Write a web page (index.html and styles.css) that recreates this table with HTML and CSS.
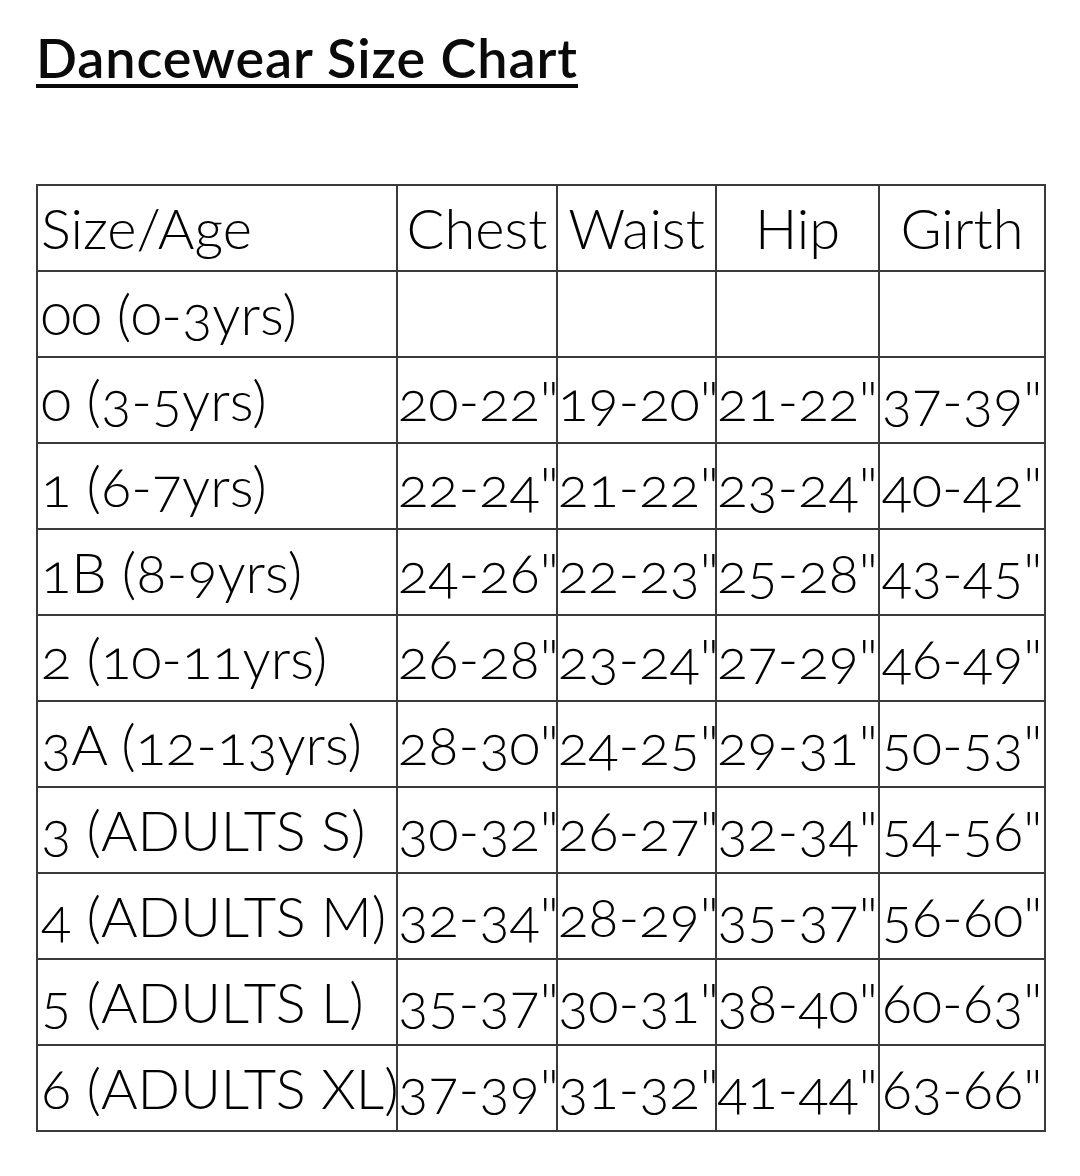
FILE: index.html
```html
<!DOCTYPE html>
<html lang="en">
<head>
<meta charset="utf-8">
<title>Dancewear Size Chart</title>
<link rel="stylesheet" href="styles.css">
</head>
<body>
<main class="page">
  <h1 class="title">Dancewear Size Chart</h1>
  <table class="chart">
    <colgroup>
      <col class="c-size">
      <col class="c-chest">
      <col class="c-waist">
      <col class="c-hip">
      <col class="c-girth">
    </colgroup>
    <tr><td class="label">Size/Age</td><td>Chest</td><td>Waist</td><td>Hip</td><td>Girth</td></tr>
    <tr><td class="label">00 (0-3yrs)</td><td></td><td></td><td></td><td></td></tr>
    <tr><td class="label">0 (3-5yrs)</td><td>20-22"</td><td>19-20"</td><td>21-22"</td><td>37-39"</td></tr>
    <tr><td class="label">1 (6-7yrs)</td><td>22-24"</td><td>21-22"</td><td>23-24"</td><td>40-42"</td></tr>
    <tr><td class="label">1B (8-9yrs)</td><td>24-26"</td><td>22-23"</td><td>25-28"</td><td>43-45"</td></tr>
    <tr><td class="label">2 (10-11yrs)</td><td>26-28"</td><td>23-24"</td><td>27-29"</td><td>46-49"</td></tr>
    <tr><td class="label">3A (12-13yrs)</td><td>28-30"</td><td>24-25"</td><td>29-31"</td><td>50-53"</td></tr>
    <tr><td class="label">3 (ADULTS S)</td><td>30-32"</td><td>26-27"</td><td>32-34"</td><td>54-56"</td></tr>
    <tr><td class="label">4 (ADULTS M)</td><td>32-34"</td><td>28-29"</td><td>35-37"</td><td>56-60"</td></tr>
    <tr><td class="label">5 (ADULTS L)</td><td>35-37"</td><td>30-31"</td><td>38-40"</td><td>60-63"</td></tr>
    <tr><td class="label">6 (ADULTS XL)</td><td>37-39"</td><td>31-32"</td><td>41-44"</td><td>63-66"</td></tr>
  </table>
</main>
</body>
</html>
```

FILE: styles.css
```css
html, body {
  margin: 0;
  padding: 0;
  background: #ffffff;
}

.page {
  padding: 26px 0 0 36px;
  font-family: Lato, "Open Sans", "Liberation Sans", sans-serif;
  color: #111111;
}

.title {
  margin: 0;
  font-size: 54px;
  line-height: 64px;
  font-weight: 600;
  letter-spacing: 0.9px;
  text-decoration: underline;
  text-decoration-thickness: 4px;
  text-underline-offset: 6px;
  color: #0a0a0a;
}

.chart {
  margin-top: 94px;
  border-collapse: collapse;
  table-layout: fixed;
  width: 1008px;
  font-size: 56px;
  font-weight: 300;
  font-variant-numeric: oldstyle-nums;
  color: #000000;
}

.c-size { width: 360px; }
.c-chest { width: 160px; }
.c-waist { width: 159px; }
.c-hip { width: 163px; }
.c-girth { width: 166px; }

.chart tr {
  height: 86px;
}

.chart td {
  border: 2px solid #3a3a3a;
  padding: 0;
  text-align: center;
  vertical-align: middle;
  white-space: nowrap;
  overflow: visible;
  line-height: 1;
}

.chart td.label {
  text-align: left;
  padding-left: 3px;
}
```
